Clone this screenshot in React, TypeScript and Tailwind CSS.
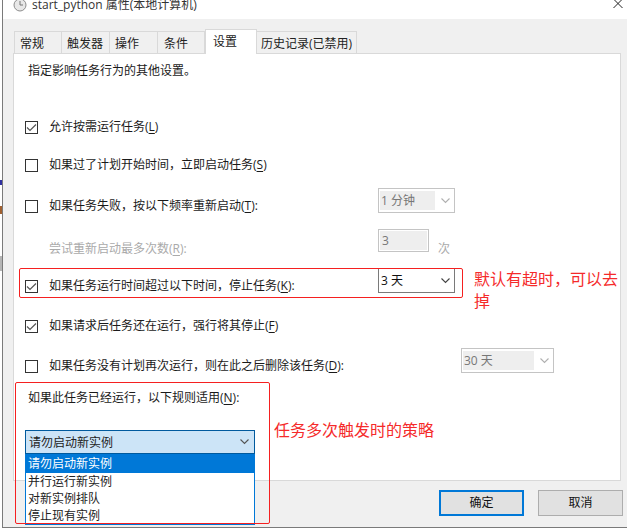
const FONT = "font-['Open_Sans','Noto_Sans_CJK_SC',sans-serif]";

function Check({ on }: { on?: boolean }) {
  return (
    <span className="w-[13px] h-[13px] border border-[#333333] bg-white shrink-0 flex items-center justify-center">
      {on && (
        <svg width="11" height="11" viewBox="0 0 11 11" fill="none">
          <path d="M1 5.5 L4 8.5 L10 2.5" stroke="#555555" strokeWidth="1.2" />
        </svg>
      )}
    </span>
  );
}

function Chevron({ color }: { color: string }) {
  return (
    <svg width="9" height="6" viewBox="0 0 9 6" fill="none">
      <path d="M0.5 0.5 L4.5 4.5 L8.5 0.5" stroke={color} strokeWidth="1.1" />
    </svg>
  );
}

function K({ children }: { children: string }) {
  return <span className="underline underline-offset-2">{children}</span>;
}

function Row({ h, on, w, children, right }: { h: string; on?: boolean; w?: string; children: React.ReactNode; right?: React.ReactNode }) {
  return (
    <div className={`flex items-center pl-[11px] ${h}`}>
      <Check on={on} />
      <span className={`ml-[11px] text-[12px] leading-[16px] text-[#1a1a1a] whitespace-nowrap shrink-0 ${w ?? ""}`}>{children}</span>
      {right}
    </div>
  );
}

function DisabledSelect({ label, w, inner }: { label: string; w: string; inner: string }) {
  return (
    <div className={`${w} mt-[-11px] h-[25px] border border-[#c4c4c4] bg-white flex items-center justify-between pl-[1px] pr-[4px] shrink-0`}>
      <span className={`${inner} h-[19px] bg-[#eeeeee] text-[12px] leading-[19px] text-[#777777] pl-[1px]`}>{label}</span>
      <Chevron color="#b0b0b0" />
    </div>
  );
}

export default function App() {
  return (
    <div className={`${FONT} relative w-[627px] h-[528px] overflow-hidden bg-white`}>
      <div className="ml-[2px] h-[528px] border-l border-[#7a7a7a] border-b flex flex-col">
        <div className="h-[19px] bg-white flex items-start pl-[10px] shrink-0 overflow-hidden">
          <svg width="14" height="14" viewBox="0 0 14 14" className="mt-[-2px]">
            <circle cx="7" cy="7" r="6" fill="#e8e8e8" stroke="#8d8d8d" />
            <path d="M7 3 V7 H10" stroke="#777777" strokeWidth="1" fill="none" />
          </svg>
          <span className="ml-[5px] mt-[-3px] text-[12px] leading-[16px] text-[#333333] whitespace-nowrap">start_python 属性(本地计算机)</span>
        </div>
        <div className="flex-1 bg-[#f0f0f0] flex flex-col pl-[10px] pr-[3px]">
          <div className="h-[34px] flex items-end pl-[1px] text-[12px] text-[#222222] shrink-0">
            <div className="w-[48px] h-[22px] bg-[#f0f0f0] border border-b-0 border-[#d9d9d9] pl-[5px] leading-[23px]">常规</div>
            <div className="w-[48px] h-[22px] bg-[#f0f0f0] border border-b-0 border-l-0 border-[#d9d9d9] pl-[5px] leading-[23px]">触发器</div>
            <div className="w-[48px] h-[22px] bg-[#f0f0f0] border border-b-0 border-l-0 border-[#d9d9d9] pl-[5px] leading-[23px]">操作</div>
            <div className="w-[47px] h-[22px] bg-[#f0f0f0] border border-b-0 border-l-0 border-[#d9d9d9] pl-[6px] leading-[23px]">条件</div>
            <div className="w-[52px] h-[25px] bg-white border border-b-0 border-[#d9d9d9] pl-[7px] leading-[24px] z-10 mb-[-1px]">设置</div>
            <div className="w-[100px] h-[22px] bg-[#f0f0f0] border border-b-0 border-l-0 border-[#d9d9d9] pl-[4px] leading-[23px] whitespace-nowrap">历史记录(已禁用)</div>
          </div>
          <div className="h-[428px] w-[608px] bg-white border border-[#d9d9d9] shrink-0">
            <div className="h-[35px] pl-[14px] pt-[9px] text-[12px] leading-[16px] text-[#1a1a1a]">指定影响任务行为的其他设置。</div>
            <div className="h-[18px]" />
            <Row h="h-[40px]" on>允许按需运行任务(<K>L</K>)</Row>
            <Row h="h-[36px]">如果过了计划开始时间，立即启动任务(<K>S</K>)</Row>
            <Row
              h="h-[46px]"
              w="w-[329px]"
              right={<DisabledSelect label="1 分钟" w="w-[77px]" inner="w-[55px]" />}
            >
              如果任务失败，按以下频率重新启动(<K>T</K>):
            </Row>
            <div className="h-[38px] flex items-center pl-[35px] text-[12px] text-[#aaaaaa]">
              <span className="whitespace-nowrap w-[329px] shrink-0 mt-[1px]">尝试重新启动最多次数(<K>R</K>):</span>
              <div className="w-[51px] h-[23px] mt-[-15px] border border-[#c4c4c4] p-[1px] bg-white shrink-0">
                <div className="h-full bg-[#eeeeee] text-[#777777] pl-[2px] leading-[19px]">3</div>
              </div>
              <span className="ml-[9px] mt-[1px] text-[#aaaaaa]">次</span>
            </div>
            <Row
              h="h-[38px]"
              w="w-[329px]"
              on
              right={
                <div className="mt-[-11px] w-[77px] h-[25px] border border-[#7a7a7a] bg-white flex items-center justify-between pl-[2px] pr-[4px] shrink-0 text-[12px] text-[#111111]">
                  <span>3 天</span>
                  <Chevron color="#444444" />
                </div>
              }
            >
              如果任务运行时间超过以下时间，停止任务(<K>K</K>):
            </Row>
            <Row h="h-[42px]" on>如果请求后任务还在运行，强行将其停止(<K>F</K>)</Row>
            <Row
              h="h-[38px]"
              w="w-[412px]"
              right={<DisabledSelect label="30 天" w="w-[93px]" inner="w-[71px]" />}
            >
              如果任务没有计划再次运行，则在此之后删除该任务(<K>D</K>):
            </Row>
            <div className="pl-[14px] pt-[5px] text-[12px] leading-[16px] text-[#1a1a1a]">
              如果此任务已经运行，以下规则适用(<K>N</K>):
            </div>
          </div>
          <div className="flex justify-end gap-[14px] pt-[9px] pr-[1px]">
            <button className="w-[85px] h-[26px] bg-[#e1e1e1] border-2 border-[#0078d7] text-[12px] text-[#111111]">确定</button>
            <button className="w-[85px] h-[26px] bg-[#e1e1e1] border border-[#adadad] text-[12px] text-[#111111]">取消</button>
          </div>
        </div>
      </div>

      {/* Close glyph of the cropped title bar */}
      <svg width="12" height="10" viewBox="0 0 12 10" className="absolute left-[612px] top-0" fill="none">
        <path d="M1.5 -1 L10.5 8 M10.5 -1 L1.5 8" stroke="#222222" strokeWidth="1" />
      </svg>

      {/* Slivers of the window behind */}
      <div className="absolute left-0 top-[256px] w-[2px] h-[15px] bg-[#b5b5b5]" />
      <div className="absolute left-0 top-[206px] w-[2px] h-[8px] bg-[#a06030]" />
      <div className="absolute left-0 top-[180px] w-[2px] h-[5px] bg-[#3030a0]" />

      {/* Combo box and its open list */}
      <div className="absolute left-[25px] top-[430px] w-[230px] text-[12px] text-[#222222]">
        <div className="h-[24px] bg-[#cce4f7] border border-[#005a9e] flex items-center justify-between pl-[3px] pr-[5px]">
          <span className="mt-[1px]">请勿启动新实例</span>
          <Chevron color="#555555" />
        </div>
        <div className="border border-t-0 border-[#0078d7] bg-white leading-[17px]">
          <div className="h-[19px] bg-[#0078d7] text-white pl-[2px] leading-[20px]">请勿启动新实例</div>
          <div className="h-[17px] pl-[2px]">并行运行新实例</div>
          <div className="h-[17px] pl-[2px]">对新实例排队</div>
          <div className="h-[17px] pl-[2px]">停止现有实例</div>
        </div>
      </div>

      {/* Red annotations */}
      <div className="absolute left-[19px] top-[268px] w-[444px] h-[30px] border border-[#f52020] rounded-[2px]" />
      <div className="absolute left-[15px] top-[382px] w-[255px] h-[142px] border border-[#f52020] rounded-[2px]" />
      <div className="absolute left-[474px] top-[268px] w-[146px] text-[16px] leading-[22px] text-[#f52a2a]">默认有超时，可以去掉</div>
      <div className="absolute left-[274px] top-[419px] text-[16px] leading-[22px] text-[#f52a2a] whitespace-nowrap">任务多次触发时的策略</div>
    </div>
  );
}
